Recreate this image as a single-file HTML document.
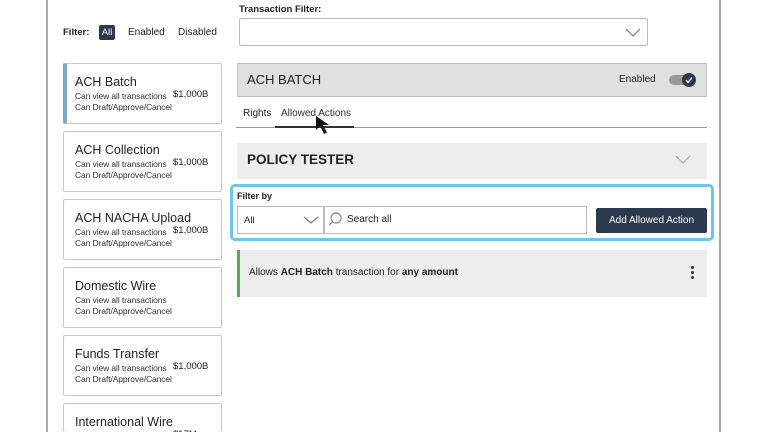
<!DOCTYPE html>
<html style="width:768px;height:432px;overflow:hidden"><head><style>
*{box-sizing:border-box;margin:0;padding:0}
body{width:768px;height:432px;overflow:hidden;background:#fff;font-family:"Liberation Sans",sans-serif;color:#222;position:relative}
.a{position:absolute}
.card{position:absolute;left:63px;width:159px;height:61px;border:1.5px solid #c9c9c9;border-radius:2px;background:#fff}
.card .t{position:absolute;left:11px;top:11px;font-size:12.5px;color:#222}
.card .s{position:absolute;left:11px;top:27px;font-size:8.5px;line-height:11px;color:#333;letter-spacing:-0.1px}
.card .p{position:absolute;left:109px;top:25px;font-size:9.5px;color:#222}
</style></head><body>
<div class="a" style="left:46px;top:0;width:2px;height:432px;background:#aaa"></div>
<div class="a" style="left:719px;top:0;width:2px;height:432px;background:#aaa"></div>

<div class="a" style="left:63px;top:27px;font-size:9.5px;font-weight:bold">Filter:</div>
<div class="a" style="left:99px;top:25px;width:16px;height:15px;background:#2b3a4f;border-radius:2px;color:#fff;font-size:9.5px;text-align:center;line-height:15px">All</div>
<div class="a" style="left:128px;top:27px;font-size:10px">Enabled</div>
<div class="a" style="left:178px;top:27px;font-size:10px">Disabled</div>

<div class="card" style="top:63px;border-left:4px solid #7ca6cf"><div class="t" style="left:8px">ACH Batch</div><div class="s" style="left:8px">Can view all transactions<br>Can Draft/Approve/Cancel</div><div class="p" style="left:106px">$1,000B</div></div>
<div class="card" style="top:131px"><div class="t">ACH Collection</div><div class="s">Can view all transactions<br>Can Draft/Approve/Cancel</div><div class="p">$1,000B</div></div>
<div class="card" style="top:199px"><div class="t">ACH NACHA Upload</div><div class="s">Can view all transactions<br>Can Draft/Approve/Cancel</div><div class="p">$1,000B</div></div>
<div class="card" style="top:267px"><div class="t">Domestic Wire</div><div class="s">Can view all transactions<br>Can Draft/Approve/Cancel</div></div>
<div class="card" style="top:335px"><div class="t">Funds Transfer</div><div class="s">Can view all transactions<br>Can Draft/Approve/Cancel</div><div class="p">$1,000B</div></div>
<div class="card" style="top:403px;height:29px;border-bottom:none"><div class="t">International Wire</div><div class="p" style="top:25px">$17M</div></div>

<div class="a" style="left:239px;top:4px;font-size:9.5px;font-weight:bold">Transaction Filter:</div>
<div class="a" style="left:239px;top:18px;width:409px;height:28px;border:1.5px solid #bbb;border-radius:2px"></div>
<svg class="a" style="left:625px;top:28px" width="16" height="10"><path d="M1 1 L8 8 L15 1" fill="none" stroke="#888" stroke-width="1.3"/></svg>

<div class="a" style="left:237px;top:63px;width:470px;height:34px;background:#e0e0e0;border:1.5px solid #bdbdbd"></div>
<div class="a" style="left:247px;top:72px;font-size:13px">ACH BATCH</div>
<div class="a" style="left:619px;top:74px;font-size:10px">Enabled</div>
<div class="a" style="left:669px;top:75px;width:24px;height:10px;background:#9a9a9a;border-radius:5px"></div>
<div class="a" style="left:682px;top:73px;width:14px;height:14px;background:#2b3a4f;border-radius:50%"></div>
<svg class="a" style="left:682px;top:73px" width="14" height="14"><path d="M4 7 L6 9.5 L10 4.5" fill="none" stroke="#fff" stroke-width="1.4"/></svg>

<div class="a" style="left:243px;top:108px;font-size:10px">Rights</div>
<div class="a" style="left:281px;top:108px;font-size:10px;color:#333">Allowed Actions</div>
<div class="a" style="left:236px;top:127px;width:471px;height:1px;background:#999"></div>
<div class="a" style="left:275px;top:126px;width:79px;height:2px;background:#333"></div>
<svg class="a" style="left:314px;top:115px" width="22" height="22"><path d="M2 1 L2 15 L6 11 L10 19 L13 17.5 L9 10 L15 10 Z" fill="#111"/></svg>

<div class="a" style="left:237px;top:143px;width:470px;height:36px;background:#ededed"></div>
<div class="a" style="left:247px;top:152px;font-size:13.5px;font-weight:bold">POLICY TESTER</div>
<svg class="a" style="left:675px;top:155px" width="16" height="10"><path d="M1 1 L8 8 L15 1" fill="none" stroke="#aaa" stroke-width="1.2"/></svg>

<div class="a" style="left:230px;top:184px;width:484px;height:57px;border:3px solid #6cc7ea;border-radius:5px"></div>
<div class="a" style="left:237px;top:191px;font-size:9px;font-weight:bold">Filter by</div>
<div class="a" style="left:237px;top:206px;width:87px;height:28px;border:1.5px solid #bbb;background:#fff"></div>
<div class="a" style="left:244px;top:215px;font-size:9.5px">All</div>
<svg class="a" style="left:303px;top:216px" width="16" height="9"><path d="M1 1 L8 7 L15 1" fill="none" stroke="#777" stroke-width="1.2"/></svg>
<div class="a" style="left:324px;top:206px;width:263px;height:28px;border:1.5px solid #bbb;background:#fff"></div>
<svg class="a" style="left:328px;top:211px" width="16" height="16"><circle cx="8" cy="7" r="5" fill="none" stroke="#888" stroke-width="1.2"/><path d="M4.5 10.5 L1.5 14" stroke="#888" stroke-width="1.3"/></svg>
<div class="a" style="left:347px;top:214px;font-size:10px">Search all</div>
<div class="a" style="left:596px;top:208px;width:111px;height:25px;background:#2b3a4f;border-radius:2px;color:#fff;font-size:10px;text-align:center;line-height:25px">Add Allowed Action</div>

<div class="a" style="left:237px;top:250px;width:470px;height:47px;background:#ededed;border-left:3px solid #4caf50"></div>
<div class="a" style="left:249px;top:267px;font-size:10px">Allows <b>ACH Batch</b> transaction for <b>any amount</b></div>
<div class="a" style="left:691px;top:266px;width:3px;height:3px;background:#333;border-radius:50%;box-shadow:0 5px 0 #333,0 10px 0 #333"></div>
</body></html>
